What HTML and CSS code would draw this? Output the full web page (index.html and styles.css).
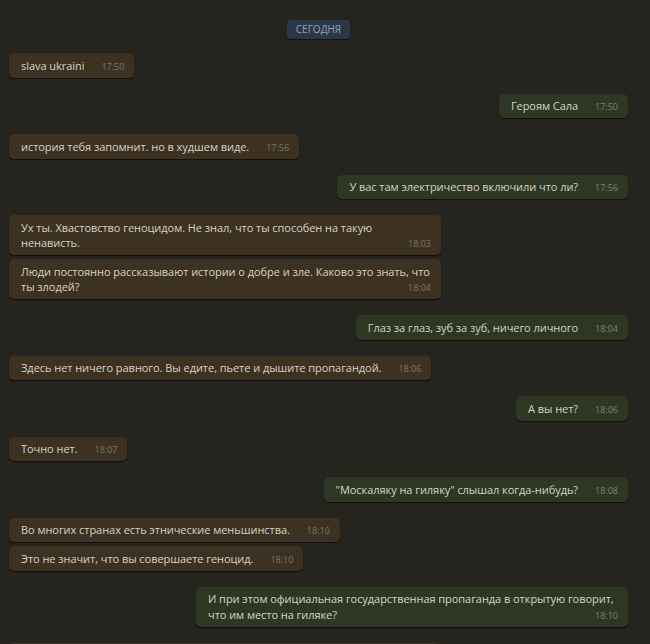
FILE: index.html
```html
<!DOCTYPE html>
<html lang="ru">
<head>
<meta charset="utf-8">
<link rel="stylesheet" href="styles.css">
</head>
<body>
<div class="chat">
  <div class="date-row"><span class="date-pill">Сегодня</span></div>

  <div class="group in">
    <div class="msg"><span class="txt">slava ukraini</span><span class="time">17:50</span></div>
  </div>
  <div class="group out">
    <div class="msg"><span class="txt">Героям Сала</span><span class="time">17:50</span></div>
  </div>
  <div class="group in">
    <div class="msg"><span class="txt">история тебя запомнит. но в худшем виде.</span><span class="time">17:56</span></div>
  </div>
  <div class="group out">
    <div class="msg"><span class="txt">У вас там электричество включили что ли?</span><span class="time">17:56</span></div>
  </div>
  <div class="group in">
    <div class="msg"><span class="txt">Ух ты. Хвастовство геноцидом. Не знал, что ты способен на такую ненависть.</span><span class="time">18:03</span></div>
    <div class="msg"><span class="txt">Люди постоянно рассказывают истории о добре и зле. Каково это знать, что ты злодей?</span><span class="time">18:04</span></div>
  </div>
  <div class="group out">
    <div class="msg"><span class="txt">Глаз за глаз, зуб за зуб, ничего личного</span><span class="time">18:04</span></div>
  </div>
  <div class="group in">
    <div class="msg"><span class="txt">Здесь нет ничего равного. Вы едите, пьете и дышите пропагандой.</span><span class="time">18:06</span></div>
  </div>
  <div class="group out">
    <div class="msg"><span class="txt">А вы нет?</span><span class="time">18:06</span></div>
  </div>
  <div class="group in">
    <div class="msg"><span class="txt">Точно нет.</span><span class="time">18:07</span></div>
  </div>
  <div class="group out">
    <div class="msg"><span class="txt">"Москаляку на гиляку" слышал когда-нибудь?</span><span class="time">18:08</span></div>
  </div>
  <div class="group in">
    <div class="msg"><span class="txt">Во многих странах есть этнические меньшинства.</span><span class="time">18:10</span></div>
    <div class="msg"><span class="txt">Это не значит, что вы совершаете геноцид.</span><span class="time">18:10</span></div>
  </div>
  <div class="group out">
    <div class="msg"><span class="txt">И при этом официальная государственная пропаганда в открытую говорит, что им место на гиляке?</span><span class="time">18:10</span></div>
  </div>
  <div class="group in">
    <div class="msg"><span class="txt">Это лозунг, а не государственная политика. Никто не совершает геноцид только из-за слов.</span><span class="time">18:11</span></div>
  </div>
</div>
</body>
</html>
```

FILE: styles.css
```css
html, body {
  margin: 0;
  padding: 0;
  background: #26241f;
  overflow: hidden;
}

body {
  font-family: "Open Sans", "Liberation Sans", sans-serif;
  color: #d8d2c4;
}

.chat {
  display: flex;
  flex-direction: column;
  gap: 16px;
  padding: 20px 22px 0 9px;
  height: 644px;
  box-sizing: border-box;
}

.date-row {
  display: flex;
  justify-content: center;
  margin-bottom: -2px;
}

.date-pill {
  background: #2b3947;
  color: #8da2b7;
  font-size: 10px;
  line-height: 19px;
  text-transform: uppercase;
  padding: 0 9px;
  border-radius: 4px;
  box-shadow: 0 1px 1px rgba(0, 0, 0, 0.55);
}

.group {
  display: flex;
  flex-direction: column;
  gap: 4px;
}

.group.in { align-items: flex-start; }
.group.out { align-items: flex-end; }

.msg {
  max-width: 432px;
  box-sizing: border-box;
  padding: 4.5px 10px 4.5px 12px;
  font-size: 11px;
  line-height: 15.5px;
  border-radius: 5px;
  box-shadow: 0 1px 1px rgba(0, 0, 0, 0.6);
}

.txt {
  letter-spacing: -0.05px;
}

.in .msg { background: #3d3122; }
.out .msg { background: #2e3724; }

.time {
  float: right;
  position: relative;
  top: 1px;
  margin-left: 17px;
  font-size: 9px;
  line-height: 15.5px;
  color: #7f7563;
}

.out .time { color: #7c8470; }
```
